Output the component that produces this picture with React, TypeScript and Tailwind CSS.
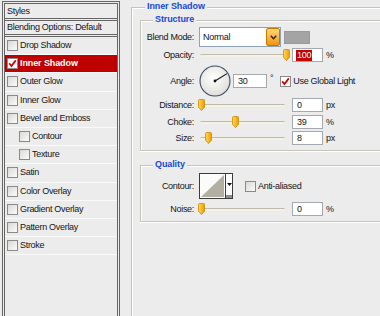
import React from "react";

type Item = { label: string; active?: boolean; indent?: boolean };

const styleItems: Item[] = [
  { label: "Drop Shadow" },
  { label: "Inner Shadow", active: true },
  { label: "Outer Glow" },
  { label: "Inner Glow" },
  { label: "Bevel and Emboss" },
  { label: "Contour", indent: true },
  { label: "Texture", indent: true },
  { label: "Satin" },
  { label: "Color Overlay" },
  { label: "Gradient Overlay" },
  { label: "Pattern Overlay" },
  { label: "Stroke" },
];

const CheckBox = ({ checked }: { checked?: boolean }) => (
  <span
    className={`flex h-[11px] w-[11px] shrink-0 items-center justify-center border border-[#8a8a8a] ${
      checked ? "bg-white" : "bg-linear-to-br from-[#d9d9d5] to-[#fbfbfb]"
    }`}
  >
    {checked && (
      <svg width="9" height="9" viewBox="0 0 9 9">
        <path d="M1.2 4.2 L3.4 7 L7.8 1.4" fill="none" stroke="#c40000" strokeWidth="1.7" />
      </svg>
    )}
  </span>
);

const Thumb = () => (
  <svg width="7" height="12" viewBox="0 0 7 12">
    <defs>
      <linearGradient id="thumb" x1="0" y1="0" x2="1" y2="0">
        <stop offset="0" stopColor="#ffd85a" />
        <stop offset="1" stopColor="#f29c00" />
      </linearGradient>
    </defs>
    <path
      d="M0.5 1.5 Q0.5 0.5 1.5 0.5 H5.5 Q6.5 0.5 6.5 1.5 V8.2 L3.5 11.5 L0.5 8.2 Z"
      fill="url(#thumb)"
      stroke="#cc8a00"
      strokeWidth="0.8"
    />
  </svg>
);

const Slider = ({ pos }: { pos: number }) => (
  <div className="relative h-[14px] w-[86px] shrink-0">
    <div className="absolute left-[1px] right-0 top-[6px] h-[3px] rounded-full border-t border-[#bdbbb0] bg-[#f5f2e4]" />
    <div className="absolute top-[1px]" style={{ left: pos - 3.5 }}>
      <Thumb />
    </div>
  </div>
);

const NumBox = ({ value, selected, w = 31 }: { value: string; selected?: boolean; w?: number }) => (
  <div
    className="flex h-[14px] shrink-0 items-center border border-[#a4a9b0] bg-white pl-[3px]"
    style={{ width: w }}
  >
    {selected ? (
      <span className="bg-[#c40000] px-[1px] py-[1px] text-white">{value}</span>
    ) : (
      <span className="pl-[1px]">{value}</span>
    )}
  </div>
);

const Label = ({ children }: { children: React.ReactNode }) => (
  <span className="w-[53px] shrink-0 text-right">{children}</span>
);

const SliderRow = ({
  label,
  pos,
  value,
  unit,
  selected,
  className,
}: {
  label: string;
  pos: number;
  value: string;
  unit: string;
  selected?: boolean;
  className: string;
}) => (
  <div className={`flex h-[14px] items-center ${className}`}>
    <Label>{label}</Label>
    <div className="ml-[5px]">
      <Slider pos={pos} />
    </div>
    <div className="ml-[7px]">
      <NumBox value={value} selected={selected} />
    </div>
    <span className="ml-[3px]">{unit}</span>
  </div>
);

const GroupTitle = ({ children, left }: { children: React.ReactNode; left: string }) => (
  <span className={`absolute top-[-6px] ${left} bg-[#ececec] px-[2px] font-bold tracking-[-0.1px] text-[#1848d8]`}>
    {children}
  </span>
);

const Dial = () => (
  <svg width="32" height="32" viewBox="0 0 32 32" className="shrink-0">
    <defs>
      <radialGradient id="dial" cx="45%" cy="40%" r="65%">
        <stop offset="0" stopColor="#ffffff" />
        <stop offset="1" stopColor="#dddcd6" />
      </radialGradient>
    </defs>
    <circle cx="16" cy="16" r="15" fill="url(#dial)" stroke="#3d4b68" strokeWidth="1.1" />
    <line x1="16" y1="16" x2="28" y2="8.6" stroke="#111" strokeWidth="1.1" />
    <circle cx="16" cy="16" r="1.4" fill="#111" />
  </svg>
);

const ContourPicker = () => (
  <div className="flex h-[26px] w-[34px] shrink-0 border border-[#3c3c3c] bg-white">
    <svg width="25" height="24" viewBox="0 0 25 24" className="shrink-0">
      <rect x="0" y="0" width="25" height="24" fill="#fbfbf8" />
      <polygon points="1,23 24,1 24,23" fill="#b3afa2" />
    </svg>
    <div className="relative flex flex-1 flex-col border-l border-[#3c3c3c]">
      <div className="flex flex-1 items-center justify-center">
        <svg width="5" height="3" viewBox="0 0 5 3">
          <polygon points="0,0 5,0 2.5,3" fill="#111" />
        </svg>
      </div>
      <div className="h-[3px] bg-[#8e8e8e]" />
    </div>
  </div>
);

export default function App() {
  return (
    <div className="flex h-[316px] w-[380px] overflow-hidden bg-[#ececec] font-['Liberation_Sans',Arial,sans-serif] text-[9px] leading-none tracking-[-0.3px] text-[#141414]">
      {/* left list of styles */}
      <div className="ml-[2px] mt-[1px] h-[330px] w-[118px] shrink-0 border-[3px] border-double border-[#666]">
        <div className="flex h-[17px] items-center border-b-[3px] border-double border-[#666] pl-[2px]">Styles</div>
        <div className="flex h-[16px] items-center border-b-[3px] border-double border-[#666] pl-[2px]">
          Blending Options: Default
        </div>
        {styleItems.map((item, i) => (
          <div
            key={i}
            className={`flex h-[18.2px] items-center gap-[2px] border-b border-[#fafafa] ${
              item.indent ? "pl-[14px]" : "pl-[2px]"
            } ${item.active ? "bg-[#bf0000] font-bold tracking-[-0.1px] text-white" : ""}`}
          >
            <CheckBox checked={item.active} />
            <span>{item.label}</span>
          </div>
        ))}
      </div>

      {/* right settings */}
      <div className="relative ml-[11px] mt-[7px] h-[330px] w-[300px] shrink-0 border-l border-t border-[#c6c4b8] shadow-[inset_1px_1px_0_#fff]">
        <GroupTitle left="left-[13px]">Inner Shadow</GroupTitle>

        <div className="relative ml-[8px] mt-[12px] w-[290px] border-b border-l border-t border-[#c6c4b8] pb-[5px] shadow-[inset_1px_1px_0_#fff,0_1px_0_#fff]">
          <GroupTitle left="left-[12px]">Structure</GroupTitle>

          <div className="mt-[6px] flex h-[20px] items-center">
            <Label>Blend Mode:</Label>
            <div className="ml-[5px] flex h-[20px] w-[82px] items-center border border-[#8fa2bb] bg-white">
              <span className="pl-[3px]">Normal</span>
              <div className="ml-auto flex h-[18px] w-[14px] items-center justify-center rounded-[2px] border border-[#c77a00] bg-linear-to-b from-[#ffd870] to-[#f09400]">
                <svg width="7" height="5" viewBox="0 0 7 5">
                  <path d="M0.8 0.8 L3.5 3.8 L6.2 0.8" fill="none" stroke="#3a2000" strokeWidth="1.4" />
                </svg>
              </div>
            </div>
            <div className="ml-[3px] h-[13px] w-[26px] border border-[#9a9a9a] bg-[#a4a4a4]" />
          </div>

          <SliderRow className="mt-[1px]" label="Opacity:" pos={87} value="100" unit="%" selected />

          <div className="mt-[3px] flex h-[32px] items-center">
            <Label>Angle:</Label>
            <div className="ml-[5px]">
              <Dial />
            </div>
            <div className="ml-[2px]">
              <NumBox value="30" w={34} />
            </div>
            <span className="ml-[3px] -translate-y-[3px]">°</span>
            <div className="ml-[7px]">
              <CheckBox checked />
            </div>
            <span className="ml-[2px]">Use Global Light</span>
          </div>

          <SliderRow className="mt-[1px]" label="Distance:" pos={2} value="0" unit="px" />
          <SliderRow className="mt-[3px]" label="Choke:" pos={36} value="39" unit="%" />
          <SliderRow className="mt-[2px]" label="Size:" pos={9} value="8" unit="px" />
        </div>

        <div className="relative ml-[8px] mt-[14px] w-[290px] border-b border-l border-t border-[#c6c4b8] pb-[5px] shadow-[inset_1px_1px_0_#fff,0_1px_0_#fff]">
          <GroupTitle left="left-[12px]">Quality</GroupTitle>

          <div className="mt-[7px] flex h-[26px] items-center">
            <Label>Contour:</Label>
            <div className="ml-[5px]">
              <ContourPicker />
            </div>
            <div className="ml-[12px]">
              <CheckBox />
            </div>
            <span className="ml-[2px]">Anti-aliased</span>
          </div>

          <SliderRow className="mt-[3px]" label="Noise:" pos={2} value="0" unit="%" />
        </div>
      </div>
    </div>
  );
}
